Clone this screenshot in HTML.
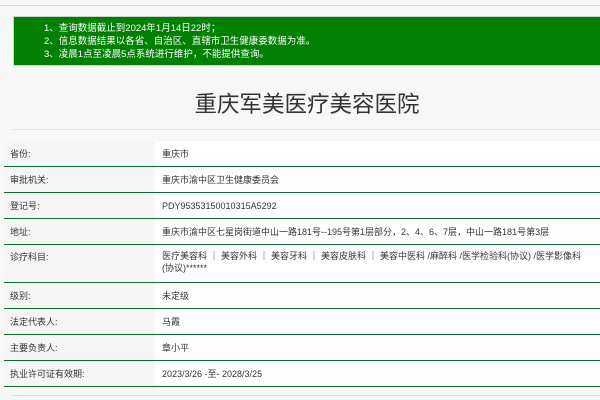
<!DOCTYPE html>
<html><head><meta charset="utf-8"><style>
body{margin:0;width:600px;height:400px;overflow:hidden;background:#f7f7f7;font-family:"Liberation Sans","Noto Sans CJK SC",sans-serif;position:relative}
.top{position:absolute;left:0;top:5px;width:600px;height:1px;background:#d6d6d6}
.g{position:absolute;left:13px;top:16px;width:600px;height:50px;background:#008000;border:1px solid #cfcfcf;box-sizing:border-box;color:#fff;font-size:9.5px;line-height:13px;padding:5px 0 0 30px}
h1{position:absolute;left:0;width:614px;top:89px;margin:0;text-align:center;font-weight:normal;font-size:22.5px;color:#333;line-height:32px}
.hl{position:absolute;left:12px;top:129px;width:600px;height:1px;background:#e3e3e3}
table{position:absolute;left:4px;top:141px;width:600px;border-collapse:collapse;font-size:9px;color:#333}
td{border-bottom:1.5px solid #0b6b2e;padding:0;height:25px;vertical-align:middle}
td.l{width:145px;padding-left:6px;background:#f5f5f5}
td.v{background:#fff;padding-left:7px}
.bl{position:absolute;left:12px;top:395px;width:600px;height:1px;background:#ddd}
</style></head><body>
<div class="top"></div>
<div class="g">1、查询数据截止到2024年1月14日22时；<br>2、信息数据结果以各省、自治区、直辖市卫生健康委数据为准。<br>3、凌晨1点至凌晨5点系统进行维护，不能提供查询。</div>
<h1>重庆军美医疗美容医院</h1>
<div class="hl"></div>
<table>
<tr><td class="l">省份:</td><td class="v">重庆市</td></tr>
<tr><td class="l">审批机关:</td><td class="v">重庆市渝中区卫生健康委员会</td></tr>
<tr><td class="l">登记号:</td><td class="v">PDY95353150010315A5292</td></tr>
<tr><td class="l">地址:</td><td class="v">重庆市渝中区七星岗街道中山一路181号--195号第1层部分，2、4、6、7层，中山一路181号第3层</td></tr>
<tr><td class="l" style="height:38px;vertical-align:top;padding-top:5px;box-sizing:border-box">诊疗科目:</td><td class="v" style="vertical-align:top;padding-top:5px;line-height:12px;padding-right:14px">医疗美容科 ｜ 美容外科 ｜ 美容牙科 ｜ 美容皮肤科 ｜ 美容中医科 /麻醉科 /医学检验科(协议) /医学影像科(协议)******</td></tr>
<tr><td class="l">级别:</td><td class="v">未定级</td></tr>
<tr><td class="l">法定代表人:</td><td class="v">马霞</td></tr>
<tr><td class="l">主要负责人:</td><td class="v">章小平</td></tr>
<tr><td class="l">执业许可证有效期:</td><td class="v">2023/3/26 -至- 2028/3/25</td></tr>
</table>
<div class="bl"></div>
</body></html>
